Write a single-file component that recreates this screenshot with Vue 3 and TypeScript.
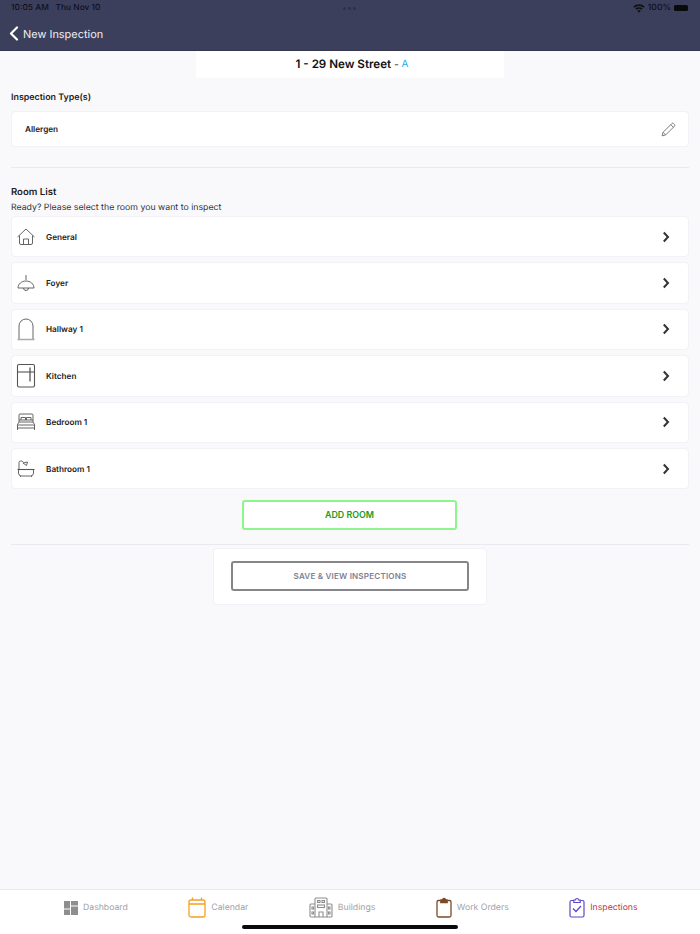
<script setup lang="ts">
const rooms = [
  { name: 'General', icon: 'home' },
  { name: 'Foyer', icon: 'lamp' },
  { name: 'Hallway 1', icon: 'arch' },
  { name: 'Kitchen', icon: 'fridge' },
  { name: 'Bedroom 1', icon: 'bed' },
  { name: 'Bathroom 1', icon: 'bath' },
]
</script>

<template>
  <div class="page">
    <header class="header">
      <div class="status">
        <span class="time">10:05 AM&nbsp;&nbsp; Thu Nov 10</span>
        <span class="dots"><i></i><i></i><i></i></span>
        <span class="status-right">
          <svg width="12" height="9" viewBox="0 0 12 9">
            <path d="M6 8.8 4.3 6.8a2.5 2.5 0 0 1 3.4 0z" fill="#111" />
            <path d="M3.4 5.8 2.3 4.6a5.4 5.4 0 0 1 7.4 0L8.6 5.8a3.9 3.9 0 0 0-5.2 0z" fill="#111" />
            <path d="M1.5 3.7.3 2.5a8.3 8.3 0 0 1 11.4 0l-1.2 1.2a6.6 6.6 0 0 0-9 0z" fill="#111" />
          </svg>
          <span class="pct">100%</span>
          <span class="battery"></span>
        </span>
      </div>
      <div class="nav">
        <svg class="back" width="10" height="15" viewBox="0 0 10 15">
          <path d="M8 1.5 2 7.5l6 6" fill="none" stroke="#fff" stroke-width="2.2" stroke-linecap="round" stroke-linejoin="round" />
        </svg>
        <span>New Inspection</span>
      </div>
    </header>

    <main class="main">
      <div class="title-card">
        <span class="title">1 - 29 New Street</span>
        <span class="dash"> - </span>
        <span class="unit">A</span>
      </div>

      <h2 class="types-label">Inspection Type(s)</h2>
      <div class="card type-card">
        <span class="type-name">Allergen</span>
        <svg width="15" height="15" viewBox="0 0 16 16" fill="none" stroke="#666" stroke-width="0.9" stroke-linejoin="round">
          <path d="M1.2 14.8 2.2 11 11.6 1.6a1.3 1.3 0 0 1 1.8 0l1 1a1.3 1.3 0 0 1 0 1.8L5 13.8z" />
          <path d="M2.2 11 5 13.8M10.4 2.8l2.8 2.8" />
        </svg>
      </div>

      <hr class="rule rule-top" />

      <h2 class="list-label">Room List</h2>
      <p class="hint">Ready? Please select the room you want to inspect</p>

      <ul class="rooms">
        <li v-for="room in rooms" :key="room.name" class="card room">
          <span class="room-icon">
            <svg width="20" height="26" viewBox="0 0 20 26" fill="none" stroke="#555" stroke-width="0.9" stroke-linejoin="round">
              <template v-if="room.icon === 'home'">
                <path d="M1.5 13 10 5l8.500 8M3.500 11.500V19a1.500 1.500 0 0 0 1.500 1.500h10a1.500 1.500 0 0 0 1.500-1.500v-7.500" />
                <path d="M7.500 20.500V15h5v5.500" />
              </template>
              <template v-else-if="room.icon === 'lamp'">
                <path d="M10 5v5" />
                <path d="M2 18c0-4 3.500-7 8-7s8 3 8 7z" />
                <path d="M7.500 18a2.500 2.500 0 0 0 5 0" />
              </template>
              <template v-else-if="room.icon === 'arch'">
                <path d="M3 23V10a7 7 0 0 1 14 0v13" />
                <path d="M1.500 23.500h17" stroke="#aaa" stroke-width="1.500" />
              </template>
              <template v-else-if="room.icon === 'fridge'">
                <rect x="1.500" y="1.500" width="17" height="22.500" rx="1.500" stroke-width="1.100" />
                <path d="M1.500 9h17" stroke-width="1.100" />
                <path d="M14 4.500v14" stroke-width="1.300" />
              </template>
              <template v-else-if="room.icon === 'bed'">
                <path d="M3 13V6a1 1 0 0 1 1-1h12a1 1 0 0 1 1 1v7" />
                <path d="M5 11V8.500h4.500V11M10.500 11V8.500H15V11M3 11h14" />
                <path d="M1.500 19v-3.500L3 13h14l1.500 2.500V19M1.500 16h17M1.500 19h17M1.500 19v2M18.500 19v2" />
              </template>
              <template v-else>
                <path d="M3 13V6.500A1.500 1.500 0 0 1 4.500 5h1A1.500 1.500 0 0 1 7 6.500" />
                <path d="m7 7 4.500-1-1 3.500z" />
                <path d="M1.500 13.500h17" stroke-width="1.100" />
                <path d="M2.500 14v3a3 3 0 0 0 3 3h9a3 3 0 0 0 3-3v-3M4.500 20v1M15.500 20v1" />
              </template>
            </svg>
          </span>
          <span class="room-name">{{ room.name }}</span>
          <svg class="chev" width="8" height="12" viewBox="0 0 8 12">
            <path d="M1.800 1.500 6 6l-4.200 4.500" fill="none" stroke="#333" stroke-width="2" />
          </svg>
        </li>
      </ul>

      <div class="add-wrap">
        <button class="btn add">ADD ROOM</button>
      </div>

      <hr class="rule rule-bottom" />

      <div class="card save-card">
        <button class="btn save">SAVE &amp; VIEW INSPECTIONS</button>
      </div>
    </main>

    <footer class="tabbar">
      <div class="tabs">
        <div class="tab">
          <svg width="14" height="14" viewBox="0 0 14 14" fill="#8e8e8e">
            <rect width="6" height="7.500" />
            <rect x="7" width="7" height="4.500" />
            <rect y="8.500" width="6" height="5.500" />
            <rect x="7" y="5.500" width="7" height="8.500" />
          </svg>
          <span>Dashboard</span>
        </div>
        <div class="tab">
          <svg width="18" height="21" viewBox="0 0 18 21" fill="none" stroke="#f5a01f" stroke-width="1.300">
            <rect x="1" y="3" width="16" height="17" rx="2" />
            <path d="M1 7h16M4.500 .5V3M13.500 .5V3" />
          </svg>
          <span>Calendar</span>
        </div>
        <div class="tab">
          <svg width="24" height="21" viewBox="0 0 24 21" fill="none" stroke="#8e8e8e" stroke-width="1.100">
            <path d="M6 20H2a1 1 0 0 1-1-1V8a1 1 0 0 1 1-1h4M18 20h4a1 1 0 0 0 1-1V8a1 1 0 0 0-1-1h-4" />
            <path d="M6 20V2a1 1 0 0 1 1-1h10a1 1 0 0 1 1 1v18z" />
            <path d="M10 20v-5h4v5" />
            <rect x="8.500" y="3.500" width="2.500" height="2" />
            <rect x="13" y="3.500" width="2.500" height="2" />
            <rect x="8.500" y="8" width="7" height="2.500" />
            <rect x="3" y="10" width="1.500" height="2" />
            <rect x="3" y="15" width="1.500" height="2" />
            <rect x="19.500" y="10" width="1.500" height="2" />
            <rect x="19.500" y="15" width="1.500" height="2" />
          </svg>
          <span>Buildings</span>
        </div>
        <div class="tab">
          <svg width="16" height="21" viewBox="0 0 16 21" fill="none" stroke="#7a4a28" stroke-width="1.300">
            <path d="M4.500 3.500H2.500a1.500 1.500 0 0 0-1.500 1.500v13.500a1.500 1.500 0 0 0 1.500 1.500h11a1.500 1.500 0 0 0 1.500-1.500V5a1.500 1.500 0 0 0-1.500-1.500h-2" />
            <path d="M4.800 5.500V3h1.700a1.500 1.500 0 0 1 3 0h1.700v2.500z" fill="#7a4a28" />
          </svg>
          <span>Work Orders</span>
        </div>
        <div class="tab tab-active">
          <svg width="16" height="21" viewBox="0 0 16 21" fill="none" stroke="#5f48c4" stroke-width="1.200">
            <path d="M4.500 3.500H2.500a1.500 1.500 0 0 0-1.500 1.500v13.500a1.500 1.500 0 0 0 1.500 1.500h11a1.500 1.500 0 0 0 1.500-1.500V5a1.500 1.500 0 0 0-1.500-1.500h-2" />
            <path d="M4.800 5.500V3h1.700a1.500 1.500 0 0 1 3 0h1.700v2.500z" />
            <path d="m4 11.500 3 3 5-5.500" stroke-width="1.300" />
          </svg>
          <span>Inspections</span>
        </div>
      </div>
      <div class="home-bar"></div>
    </footer>
  </div>
</template>

<style>
html,
body {
  margin: 0;
  background: #f9f9fc;
}
</style>

<style scoped>
.page {
  width: 700px;
  height: 934px;
  display: flex;
  flex-direction: column;
  background: #f9f9fc;
  font-family: Inter, 'Liberation Sans', sans-serif;
  text-rendering: geometricPrecision;
  color: #1c1c1e;
  overflow: hidden;
}
.header {
  height: 51px;
  flex: none;
  box-sizing: border-box;
  background: #3c3f5b;
  border-bottom: 1px solid #33364e;
}
.status {
  height: 16px;
  padding: 0 11px;
  display: flex;
  align-items: center;
  justify-content: space-between;
  font-size: 8.400px;
  font-weight: 500;
  color: #0e101e;
  position: relative;
}
.dots {
  position: absolute;
  left: 343px;
  top: 7px;
  display: flex;
  gap: 2px;
}
.dots i {
  width: 3px;
  height: 3px;
  border-radius: 50%;
  background: #2d3048;
}
.status-right {
  display: flex;
  align-items: center;
  gap: 3px;
}
.pct {
  font-size: 8.600px;
}
.battery {
  width: 14px;
  height: 6px;
  border-radius: 1.500px;
  background: #0a0a0a;
  margin-right: 1px;
}
.nav {
  height: 35px;
  display: flex;
  align-items: center;
  gap: 4px;
  padding-left: 9px;
  color: #eeeef2;
  font-size: 10.940px;
}
.back {
  flex: none;
}
.main {
  flex: 1;
  padding: 0 11px;
  min-height: 0;
}
.title-card {
  width: 308px;
  height: 27px;
  margin-left: 185px;
  background: #fff;
  border-radius: 0 0 3px 3px;
  display: flex;
  align-items: center;
  justify-content: center;
  white-space: pre;
  font-size: 11.600px;
  padding: 0 0 1px 4px;
  box-sizing: border-box;
}
.title {
  font-weight: 600;
  color: #111;
}
.dash {
  color: #555;
  font-weight: 500;
  font-size: 10.500px;
}
.unit {
  color: #2fa9ea;
  font-size: 10px;
}
.types-label {
  margin: 13px 0 0;
  height: 14px;
  line-height: 14px;
  font-size: 8.900px;
  font-weight: 600;
  color: #222;
}
.card {
  box-sizing: border-box;
  background: #fff;
  border: 1px solid #f1f1f6;
  border-radius: 4px;
}
.type-card {
  margin-top: 6px;
  height: 36px;
  display: flex;
  align-items: center;
  justify-content: space-between;
  padding: 0 12px 0 13px;
}
.type-name {
  font-size: 8.200px;
  font-weight: 600;
  color: #222;
}
.rule {
  height: 1px;
  margin: 0;
  border: 0;
  background: #e9e9f0;
}
.rule-top {
  margin-top: 20px;
}
.list-label {
  margin: 18px 0 0;
  height: 13px;
  line-height: 13px;
  font-size: 9.570px;
  font-weight: 600;
  color: #222;
}
.hint {
  margin: 3px 0 0;
  height: 13px;
  line-height: 13px;
  font-size: 8.750px;
  color: #333;
}
.rooms {
  list-style: none;
  margin: 1px 0 0;
  padding: 0;
  display: flex;
  flex-direction: column;
  gap: 5px;
}
.room {
  height: 41.400px;
  display: flex;
  align-items: center;
  padding: 0 18px 0 5px;
}
.room-icon {
  width: 20px;
  height: 26px;
  flex: none;
  margin-left: -1px;
}
.room-name {
  margin-left: 10px;
  flex: 1;
  font-size: 8.200px;
  font-weight: 600;
  color: #222;
}
.add-wrap {
  margin-top: 10.600px;
  display: flex;
  justify-content: center;
  padding-right: 1px;
}
.btn {
  box-sizing: border-box;
  background: #fff;
  border-radius: 3px;
  font-family: inherit;
  font-weight: 600;
  padding: 0;
}
.add {
  width: 215px;
  height: 30px;
  border: 2px solid #8cf58c;
  color: #219a21;
  font-size: 8.900px;
}
.rule-bottom {
  margin-top: 14px;
}
.save-card {
  width: 274px;
  height: 57px;
  margin: 3px 0 0 202px;
  display: flex;
  align-items: center;
  justify-content: center;
}
.save {
  width: 238px;
  height: 30px;
  border: 2px solid #85858a;
  color: #7f7f95;
  font-size: 8.050px;
  letter-spacing: 0.200px;
}
.tabbar {
  height: 45px;
  flex: none;
  box-sizing: border-box;
  background: #fff;
  border-top: 1px solid #e8e8ee;
  position: relative;
}
.tabs {
  height: 35px;
  display: flex;
  align-items: center;
  gap: 60.500px;
  padding-left: 64px;
  font-size: 8.700px;
  color: #a3a3a8;
}
.tab {
  display: flex;
  align-items: center;
  gap: 5px;
}
.tab-active {
  color: #b83a48;
}
.home-bar {
  position: absolute;
  left: 242px;
  bottom: 5px;
  width: 216px;
  height: 4px;
  border-radius: 2px;
  background: #0a0a0a;
}
</style>
